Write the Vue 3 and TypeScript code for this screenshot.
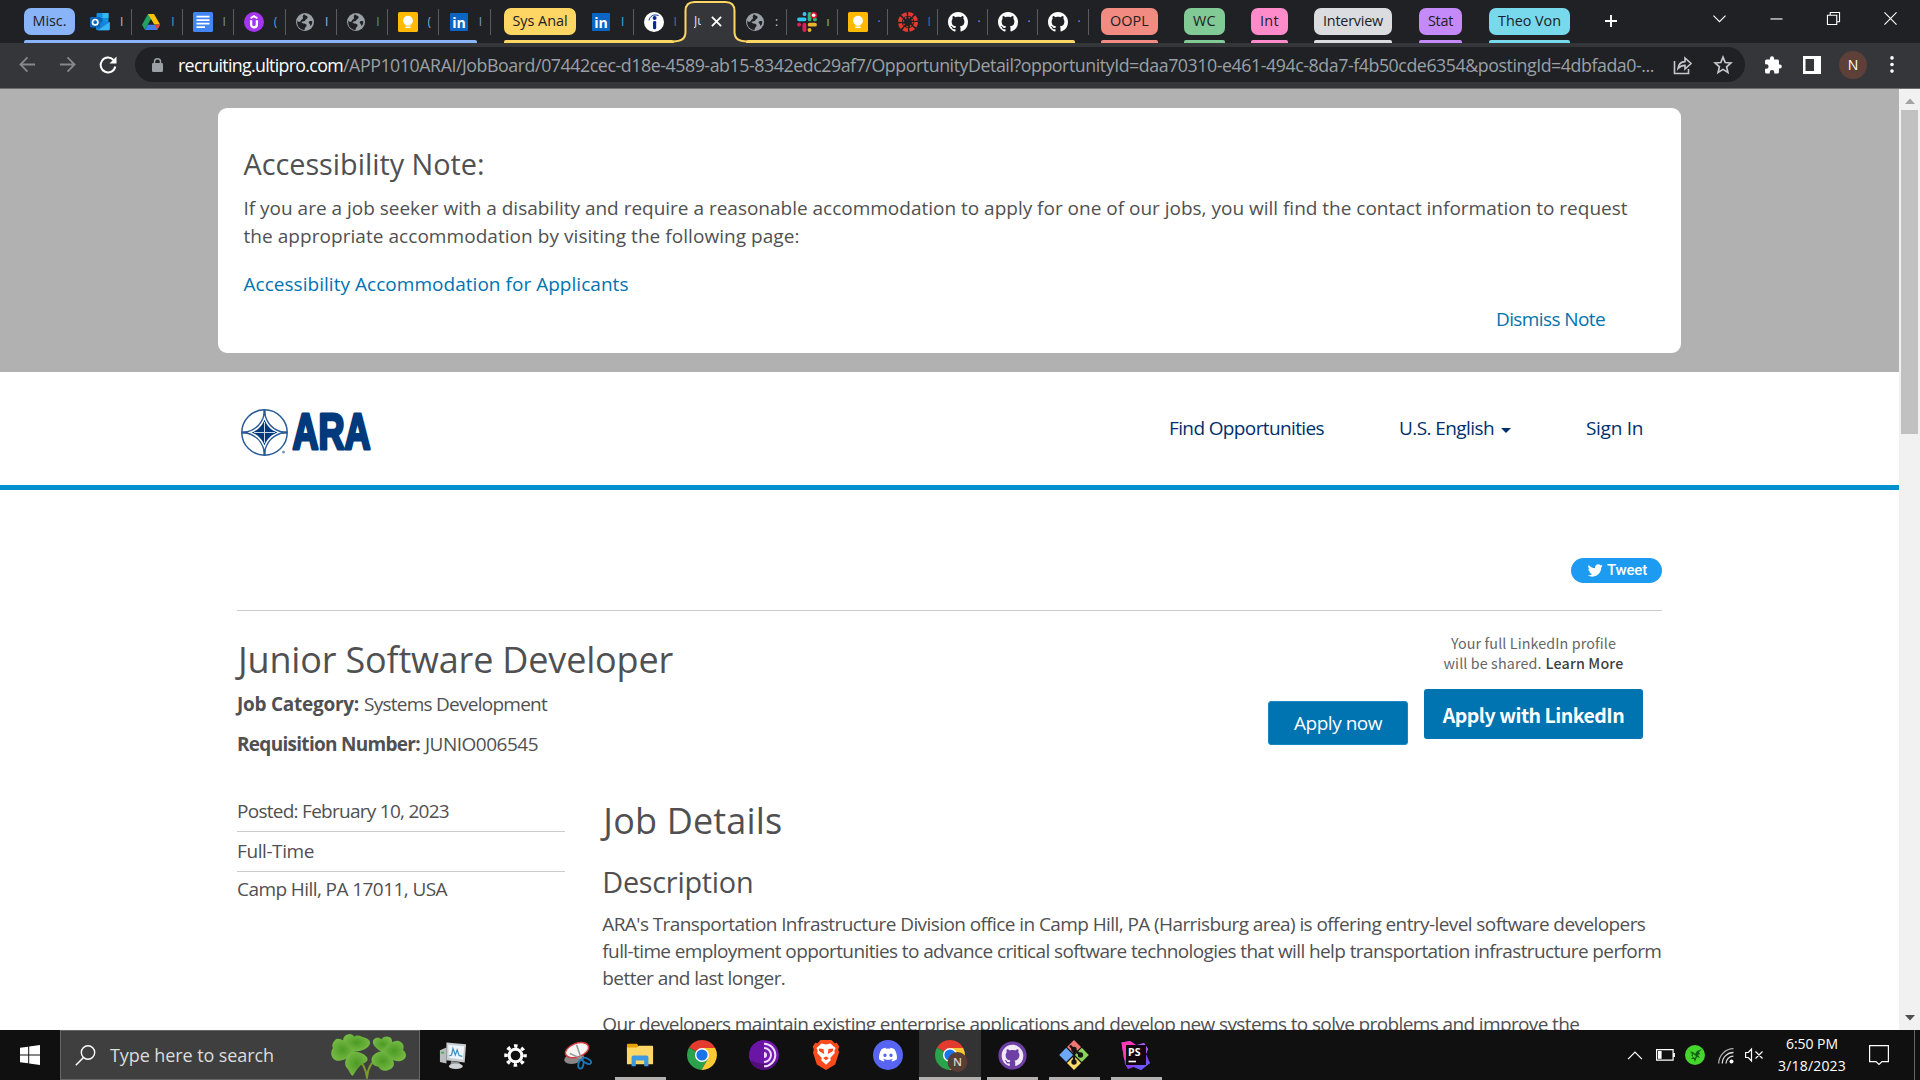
<script setup lang="ts">
import type { Directive } from 'vue'

interface Tab {
  icon: string
  letter: string
  color: string
  width: number
  divider: boolean
}
interface Group {
  label: string
  color: string
  width: number
  gap: number
}
interface TaskItem {
  icon: string
  width: number
  size: number
  running?: boolean
  active?: boolean
}

// Tracks a line of text so that it fills the given width.
const vFit: Directive<HTMLElement, number> = {
  mounted(el, binding) {
    const count = (el.textContent ?? '').trim().length
    const natural = el.getBoundingClientRect().width
    if (count > 0) el.style.letterSpacing = `${(binding.value - natural) / count}px`
  },
}

const octocat =
  'M8 0C3.58 0 0 3.58 0 8c0 3.54 2.29 6.53 5.47 7.59.4.07.55-.17.55-.38 0-.19-.01-.82-.01-1.49-2.01.37-2.53-.49-2.69-.94-.09-.23-.48-.94-.82-1.13-.28-.15-.68-.52-.01-.53.63-.01 1.08.58 1.23.82.72 1.21 1.87.87 2.33.66.07-.52.28-.87.51-1.07-1.78-.2-3.64-.89-3.64-3.95 0-.87.31-1.59.82-2.15-.08-.2-.36-1.02.08-2.12 0 0 .67-.21 2.2.82.64-.18 1.32-.27 2-.27s1.36.09 2 .27c1.53-1.04 2.2-.82 2.2-.82.44 1.1.16 1.92.08 2.12.51.56.82 1.27.82 2.15 0 3.07-1.87 3.75-3.65 3.95.29.25.54.73.54 1.48 0 1.07-.01 1.93-.01 2.2 0 .21.15.46.55.38A8.01 8.01 0 0 0 16 8c0-4.42-3.58-8-8-8z'
const discord =
  'M20.317 4.37a19.79 19.79 0 0 0-4.885-1.515.074.074 0 0 0-.079.037c-.21.375-.444.865-.608 1.25a18.3 18.3 0 0 0-5.487 0 12.6 12.6 0 0 0-.617-1.25.077.077 0 0 0-.079-.037A19.74 19.74 0 0 0 3.677 4.37a.07.07 0 0 0-.032.027C.533 9.046-.319 13.58.099 18.058a.082.082 0 0 0 .031.056 19.9 19.9 0 0 0 5.993 3.03.078.078 0 0 0 .084-.028c.462-.63.873-1.295 1.226-1.994a.076.076 0 0 0-.041-.106 13.1 13.1 0 0 1-1.872-.892.077.077 0 0 1-.008-.128c.126-.094.252-.192.372-.291a.074.074 0 0 1 .078-.01c3.928 1.793 8.18 1.793 12.061 0a.074.074 0 0 1 .079.009c.12.099.246.198.373.292a.077.077 0 0 1-.007.128 12.3 12.3 0 0 1-1.873.891.077.077 0 0 0-.041.107c.36.698.772 1.363 1.225 1.993a.076.076 0 0 0 .084.029 19.84 19.84 0 0 0 6.002-3.03.077.077 0 0 0 .031-.055c.5-5.177-.838-9.674-3.548-13.66a.061.061 0 0 0-.031-.029zM8.02 15.331c-1.183 0-2.157-1.086-2.157-2.419s.956-2.419 2.157-2.419c1.21 0 2.176 1.095 2.157 2.419 0 1.333-.956 2.419-2.157 2.419zm7.975 0c-1.183 0-2.157-1.086-2.157-2.419s.955-2.419 2.157-2.419c1.21 0 2.176 1.095 2.157 2.419 0 1.333-.946 2.419-2.157 2.419z'

const chromeMark = `
  <path d="M15 15 2.01 7.5A15 15 0 0 1 28 7.5z" fill="#e33b2e"/>
  <path d="M15 15 2.01 7.5A15 15 0 0 0 14.5 30L21 18.5z" fill="#2ba24c"/>
  <path d="M15 8H28.2A15 15 0 0 1 14.5 30L21 18.5z" fill="#fcc934"/>
  <path d="M15 8H28.2L27.9 7.4 15 6z" fill="#e33b2e"/>
  <circle cx="15" cy="15" r="7" fill="#fff"/><circle cx="15" cy="15" r="5.6" fill="#1a73e8"/>`

// Twenty-unit marks for the tabs.
const tabIcons: Record<string, string> = {
  outlook: `
    <rect x="6.5" y="1" width="12" height="10" rx="1" fill="#1490df"/>
    <rect x="12.5" y="1" width="6" height="5" fill="#35b8f1"/><rect x="6.5" y="6" width="6" height="5" fill="#0f5fae"/>
    <path d="M6 10.5 19.7 10v7a1.3 1.3 0 0 1-1.3 1.3H7.3A1.3 1.3 0 0 1 6 17z" fill="#1784d9"/>
    <path d="M19.7 10 8 18.2h10.4a1.3 1.3 0 0 0 1.3-1.3z" fill="#35b8f1"/>
    <rect x="0" y="5" width="10.4" height="10.4" rx="1" fill="#0a66bc"/>
    <circle cx="5.2" cy="10.2" r="2.7" fill="none" stroke="#fff" stroke-width="1.7"/>`,
  drive: `
    <path d="M7 2h6l-6.5 11L3.7 17.6 1 12.8z" fill="#1ea362"/>
    <path d="M7 2h6l6.1 10.6h-5.8z" fill="#ffc107"/>
    <path d="M6.6 12.8h12.5l-3 5.2H3.7z" fill="#3f7de8"/>
    <path d="M13.5 12.8h5.6l-2.9 5z" fill="#ea4335"/>`,
  docs: `
    <rect width="20" height="20" rx="1.6" fill="#4285f4"/>
    <path d="M3.5 4.7h13M3.5 8.2h13M3.5 11.7h13M3.5 15.2h8.5" stroke="#fff" stroke-width="1.7"/>`,
  udemy: `
    <circle cx="10" cy="10" r="10" fill="#a435f0"/>
    <path d="M6.6 6.2 10 4.2l3.4 2" fill="none" stroke="#fff" stroke-width="1.9"/>
    <path d="M7.1 8.3v4.2a2.9 2.9 0 0 0 5.8 0V8.3" fill="none" stroke="#fff" stroke-width="2.3"/>`,
  globe: `
    <circle cx="10" cy="10" r="9" fill="#9aa0a6"/>
    <path d="M9.2 2.3c1 1.9 3.6 1.2 3.4 3.1-.1 1.7-2.1 1.4-2.3 2.9-.2 1.3-2.4 1-3.3 1.5-1.3.6.5 1.7 1.9 1.7 1.6 0 3.2 1 2.6 2.5-.5 1.2-2 1.5-1.9 3.9-5.5-.2-8.4-5.3-7.1-9.5.6 1 1.3 1.5 2.1 1.5 1.3 0 1.1-1.9 2.3-2.4 1.1-.4 1.4-1.1.9-2.2-.3-.9.3-2 1.4-3z" fill="#202124"/>
    <path d="M17.3 9.4c-1.7-.7-3.4-.2-3.6 1.1-.1 1.1 1.4.9 1.3 2.2 0 .7.5 1 .9 1 1-1.3 1.5-2.8 1.4-4.3z" fill="#202124"/>`,
  keep: `
    <rect width="20" height="20" rx="1.6" fill="#ffba00"/>
    <circle cx="10" cy="8.6" r="4.9" fill="#fff"/><path d="M7.4 11h5.2v2.5H7.4zM7.4 14.4h5.2v1.7H7.4z" fill="#fff"/>`,
  linkedin: `
    <rect x="1" y="1" width="18" height="18" rx="1" fill="#0a66c2"/>
    <text x="3.2" y="16" font-size="15" font-weight="700" font-family="Open Sans, sans-serif" fill="#fff" textLength="13.6" lengthAdjust="spacingAndGlyphs">in</text>`,
  indeed: `
    <circle cx="10" cy="10" r="10" fill="#fff"/>
    <circle cx="10.6" cy="6" r="2" fill="#08299b"/><rect x="9" y="8.9" width="3.2" height="8.4" rx="1.4" fill="#08299b"/>
    <path d="M5 8.4C6 4 9.5 1.8 14.6 3.6" fill="none" stroke="#08299b" stroke-width="1"/>`,
  slack: `
    <g stroke-width="3.8" stroke-linecap="round">
    <path d="M2 7.3h5.6M7.5 2v.2" stroke="#36c5f0"/><path d="M12.6 2v5.4M18 7.4h-.2" stroke="#2eb67d"/>
    <path d="M12.6 12.7H18M12.5 18v-.2" stroke="#ecb22e"/><path d="M7.4 12.6V18M2 12.6h.2" stroke="#e01e5a"/></g>
    <circle cx="16.7" cy="3.3" r="3.3" fill="#e8102a"/><circle cx="16.7" cy="3.3" r="1.8" fill="#fff"/>`,
  canvas: `
    <circle cx="10" cy="10" r="8.1" fill="none" stroke="#e63a2c" stroke-width="3.8" stroke-dasharray="4.8 1.56"/>
    <circle cx="10" cy="10" r="4.7" fill="none" stroke="#e63a2c" stroke-width="1.5" stroke-dasharray="1.5 2.19"/>`,
  github: `<path d="${octocat}" transform="scale(1.25)" fill="#fff"/>`,
}

// Thirty-unit marks for the task bar.
const taskIcons: Record<string, string> = {
  monitor: `
    <path d="M1 10 8 7v17l-7-1.500z" fill="#b9bdc0"/><path d="M2 12.500h3.500" stroke="#4caf50" stroke-width="2"/>
    <path d="M8 1.500 29 3.500 27.500 23 8 20.500z" fill="#c9cccf"/><path d="M10 4 27 5.500 25.500 20 10.500 18z" fill="#eef6fb"/>
    <path d="m11 16 2.500-1 1.500-7 2.500 7 2-5.500 2 6 3.500 1" fill="none" stroke="#3c8fc6" stroke-width="1.300"/>
    <path d="M13 21.500 22 23l1.500 4H12z" fill="#8f9498"/><ellipse cx="18" cy="27" rx="7.500" ry="3" fill="#cfd2d4"/>`,
  gear: `
    <circle cx="15" cy="15" r="7.6" fill="none" stroke="#fff" stroke-width="3.6"/>
    <circle cx="15" cy="15" r="11.4" fill="none" stroke="#fff" stroke-width="4.2" stroke-dasharray="4.2 4.754" stroke-dashoffset="2.1"/>`,
  snip: `
    <ellipse cx="11.5" cy="18" rx="10.5" ry="5.5" fill="#8c8686" transform="rotate(-12 11.5 18)"/>
    <ellipse cx="14.5" cy="9.5" rx="12.5" ry="7" fill="#f7f4f4" stroke="#d63b3f" stroke-width="1.5" transform="rotate(-20 14.5 9.5)"/>
    <path d="m14 4 5.5 16M7 13l14 6" stroke="#9a9a9a" stroke-width="1.6"/>
    <ellipse cx="18.5" cy="24" rx="2.6" ry="4.6" fill="none" stroke="#1976b8" stroke-width="1.9" transform="rotate(12 18.5 24)"/>
    <ellipse cx="24.5" cy="20.5" rx="5" ry="2.4" fill="none" stroke="#1976b8" stroke-width="1.9" transform="rotate(28 24.5 20.5)"/>`,
  folder: `
    <path d="M1 4.2A1.2 1.2 0 0 1 2.2 3h9.5l2 3H28a1 1 0 0 1 1 1v4H1z" fill="#e9a100"/>
    <path d="M1 7h10.5L14 5h14a1 1 0 0 1 1 1v18a1 1 0 0 1-1 1H2a1 1 0 0 1-1-1z" fill="#ffd766"/>
    <path d="M6 27V17.500a2 2 0 0 1 2-2h14a2 2 0 0 1 2 2V27h-4.500v-6h-9v6z" fill="#3c9ae0"/>`,
  chrome: chromeMark,
  tor: `
    <circle cx="15" cy="15" r="14.8" fill="#7318b5"/><path d="M15 .2a14.8 14.8 0 0 0 0 29.6z" fill="#6a15a5"/>
    <path d="M1 20a14.8 14.8 0 0 0 28 0 30 30 0 0 1-28 0z" fill="#420c5d" opacity=".6"/>
    <path d="M15 3.7a11.3 11.3 0 0 1 0 22.6M15 8a7 7 0 0 1 0 14" fill="none" stroke="#f0ddfa" stroke-width="2"/>
    <path d="M15 12a3 3 0 0 1 0 6z" fill="#f0ddfa"/>`,
  brave: `
    <path d="M9.5 0h11l3 3.2 2.2-.4 2.5 3.6-1 3.2.8 3-3.8 12L15 30l-9.2-5.4L2 12.6l.8-3-1-3.2 2.5-3.6 2.2.4z" fill="#fb4a1c"/>
    <path d="m15 4.5 4.5-1L24.5 8l-1.2 3 .5 2-4.6 5 .6 2.3L15 24.8l-4.8-4.5.6-2.3-4.6-5 .5-2-1.2-3 5-4.5z" fill="#fff"/>
    <path d="m8 8.5 4.5.4.7 5-1.8-1L8 11zM22 8.5l-4.5.4-.7 5 1.8-1L22 11zM15 10.5v6l3 1.6-3 2.2-3-2.2 3-1.6" fill="#fb4a1c"/>`,
  discord: `<circle cx="15" cy="15" r="15" fill="#5865f2"/><path d="${discord}" transform="translate(6 5.6) scale(.75)" fill="#fff"/>`,
  profile: `${chromeMark}
    <circle cx="22.5" cy="22" r="10" fill="#5a3d34"/>
    <text x="22.5" y="26.2" text-anchor="middle" font-size="11.5" font-weight="600" font-family="Open Sans, sans-serif" fill="#d9d2cf">N</text>`,
  octo: `<circle cx="15" cy="15" r="14.6" fill="#6e40a5"/><path d="${octocat}" transform="translate(3.8 4) scale(1.4)" fill="#f1eaf6"/>`,
  git: `
    <path d="m15 0 7 7-7 7-7-7z" fill="#f07575"/><path d="m7.2 7.8 7 7.2-7 7-7-7z" fill="#6ca8f7"/>
    <path d="m22.8 7.8 7 7.2-7 7-7-7z" fill="#8bd35b"/><path d="m15 16 7 7-7 7-7-7z" fill="#fbdc6a"/>
    <path d="M11 5.5 15 10v12M15 10l7 5" fill="none" stroke="#151515" stroke-width="2.3"/>
    <circle cx="15" cy="9.5" r="2.7" fill="#151515"/><circle cx="15" cy="22" r="2.7" fill="#151515"/><circle cx="21.5" cy="15" r="2.7" fill="#151515"/>`,
  storm: `
    <path d="M.5 2.5 9 1l6 4 8-2 4 6-2 5 4 9-9 7-7-3-6 2-3-5z" fill="#8a3df5"/>
    <path d="M.5 2.5 9 1l6 4-9 17-3-3z" fill="#ff39b4"/><path d="m17 5 6-2 4 6-2 5-6-1z" fill="#b45cf0"/>
    <path d="m23 18 6 5-9 7-7-3z" fill="#6b57ff"/>
    <rect x="5" y="5" width="20" height="20" fill="#12060f"/><rect x="7.5" y="20.7" width="7.5" height="1.6" fill="#fff"/>
    <text x="7" y="15.5" font-size="10.5" font-weight="700" font-family="Open Sans, sans-serif" fill="#fff" textLength="12.5">PS</text>`,
}

const miscTabs: Tab[] = ['outlook', 'drive', 'docs', 'udemy', 'globe', 'globe', 'keep', 'linkedin'].map((icon, i) => ({
  icon,
  letter: ['I', 'I', 'I', '(', 'I', 'I', '(', 'I'][i],
  color: ['#b7bfc4', '#39a4c9', '#6f9aa3', '#4aa9dc', '#9ab8e6', '#4f9c97', '#7fb3d6', '#8098c8'][i],
  width: 51.25,
  divider: true,
}))
const beforeActive: Tab[] = [
  { icon: 'linkedin', letter: 'I', color: '#33b1e0', width: 52.5, divider: true },
  { icon: 'indeed', letter: 'I', color: '#5c6f84', width: 50, divider: false },
]
const afterActive: Tab[] = [
  { icon: 'globe', letter: ':', color: '#c3cad0', width: 51.5, divider: true },
  { icon: 'slack', letter: 'ı', color: '#7fc1d8', width: 51, divider: true },
  { icon: 'keep', letter: '·', color: '#3e9ce6', width: 50, divider: true },
  { icon: 'canvas', letter: 'I', color: '#2e79c0', width: 50, divider: true },
  { icon: 'github', letter: '·', color: '#65a9ee', width: 50, divider: true },
  { icon: 'github', letter: '·', color: '#65a9ee', width: 50, divider: true },
  { icon: 'github', letter: '·', color: '#65a9ee', width: 50.5, divider: true },
]
const groups: Group[] = [
  { label: 'OOPL', color: '#f28b82', width: 57, gap: 12 },
  { label: 'WC', color: '#81c995', width: 41, gap: 26 },
  { label: 'Int', color: '#ff8bcb', width: 37, gap: 26 },
  { label: 'Interview', color: '#dadce0', width: 78, gap: 26 },
  { label: 'Stat', color: '#c58af9', width: 43, gap: 27 },
  { label: 'Theo Von', color: '#78d9ec', width: 81, gap: 27 },
]
const tasks: TaskItem[] = [
  { icon: 'monitor', width: 64, size: 28 },
  { icon: 'gear', width: 60, size: 25 },
  { icon: 'snip', width: 64, size: 29 },
  { icon: 'folder', width: 62, size: 28, running: true },
  { icon: 'chrome', width: 62, size: 30 },
  { icon: 'tor', width: 62, size: 30 },
  { icon: 'brave', width: 62, size: 30 },
  { icon: 'discord', width: 62, size: 30 },
  { icon: 'profile', width: 62, size: 30, running: true, active: true },
  { icon: 'octo', width: 62, size: 29, running: true },
  { icon: 'git', width: 62, size: 30, running: true },
  { icon: 'storm', width: 62, size: 30, running: true },
]
</script>

<template>
  <div class="screen">
    <header class="strip">
      <div class="cluster misc">
        <div class="cell-row">
          <span class="pill" style="--tint: #8ab4f8; width: 51px"><b v-fit="34">Misc.</b></span>
          <div v-for="(t, i) in miscTabs" :key="i" class="tab" :class="{ divided: t.divider, first: i === 0 }" :style="{ width: t.width + 'px' }">
            <svg viewBox="0 0 20 20" v-html="tabIcons[t.icon]"></svg>
            <i :style="{ color: t.color }">{{ t.letter }}</i>
          </div>
        </div>
        <div class="line blue"></div>
      </div>
      <div class="cluster sys">
        <div class="cell-row">
          <span class="pill" style="--tint: #fdd663; width: 72px"><b v-fit="55">Sys Anal</b></span>
          <div v-for="(t, i) in beforeActive" :key="i" class="tab" :class="{ divided: t.divider, first: i === 0 }" :style="{ width: t.width + 'px' }">
            <svg viewBox="0 0 20 20" v-html="tabIcons[t.icon]"></svg>
            <i :style="{ color: t.color }">{{ t.letter }}</i>
          </div>
          <div class="active-tab">
            <svg class="outline" viewBox="0 0 74 43">
              <path d="M0 43C7 42 12.500 39 12.500 32V11c0-6 3-9 9-9h31c6 0 9 3 9 9v21c0 7 5 10 12.500 11z" fill="#35363a" />
              <path d="M0 41.500c8 0 12.500-3 12.500-9.500V11c0-6 3-9 9-9h31c6 0 9 3 9 9v21c0 6.500 4.500 9.500 12.500 9.500" fill="none" stroke="#fdd663" stroke-width="2" />
            </svg>
            <i class="title">Ju</i>
            <svg class="close" viewBox="0 0 12 12"><path d="m1 1 10 10M11 1 1 11" stroke="#fff" stroke-width="2" /></svg>
          </div>
          <div v-for="(t, i) in afterActive" :key="i" class="tab" :class="{ divided: t.divider }" :style="{ width: t.width + 'px' }">
            <svg viewBox="0 0 20 20" v-html="tabIcons[t.icon]"></svg>
            <i :style="{ color: t.color }">{{ t.letter }}</i>
          </div>
        </div>
        <div class="line-split"><div class="line left"></div><div class="line right"></div></div>
      </div>
      <div v-for="g in groups" :key="g.label" class="cluster" :style="{ marginLeft: g.gap + 'px', width: g.width + 'px', '--tint': g.color }">
        <div class="cell-row"><span class="pill wide"><b v-fit="g.width - 18">{{ g.label }}</b></span></div>
        <div class="line tint"></div>
      </div>
      <svg class="plus" viewBox="0 0 14 14"><path d="M7 0v14M0 7h14" stroke="#fff" stroke-width="2.200" /></svg>
      <div class="window-keys">
        <svg viewBox="0 0 14 14"><path d="m.5 4 6.500 6.500L13.500 4" /></svg>
        <svg viewBox="0 0 14 14"><path d="M.5 7.500h13" /></svg>
        <svg viewBox="0 0 14 14"><path d="M.5 3.500h10v10H.5zM3.500 3.500v-3h10v10h-3" /></svg>
        <svg viewBox="0 0 14 14"><path d="m.5.500 13 13M13.500.500l-13 13" /></svg>
      </div>
    </header>

    <div class="toolbar">
      <svg class="back" viewBox="0 0 18 18"><path d="M17 9H2M9 1.500 1.500 9 9 16.500" /></svg>
      <svg class="forward" viewBox="0 0 18 18"><path d="M1 9h15M9 1.500 16.500 9 9 16.500" /></svg>
      <svg class="reload" viewBox="0 0 18 18"><path d="M16.300 10.500A7.400 7.400 0 1 1 14.500 4" fill="none" stroke="#fff" stroke-width="2" /><path d="M17.500.500v7h-7z" fill="#fff" /></svg>
      <div class="omnibox">
        <svg class="lock" viewBox="0 0 11 14"><rect y="5" width="11" height="9" rx="1.200" fill="#9aa0a6" /><path d="M2.500 6V3.700a3 3 0 0 1 6 0V6" fill="none" stroke="#9aa0a6" stroke-width="1.500" /></svg>
        <span v-fit="165" class="host">recruiting.ultipro.com</span>
        <span v-fit="1311" class="path">/APP1010ARAI/JobBoard/07442cec-d18e-4589-ab15-8342edc29af7/OpportunityDetail?opportunityId=daa70310-e461-494c-8da7-f4b50cde6354&amp;postingId=4dbfada0-...</span>
        <svg class="share" viewBox="0 0 20 20"><path d="M1.500 6v12.500h14V14M5 13.500C5.500 9 8 6.800 12 6.600V3l6 5.500-6 5.500v-3.600c-3 0-5 .8-7 3.100z" /></svg>
        <svg class="star" viewBox="0 0 20 20"><path d="m10 2.200 2.200 5.300 5.700.500-4.300 3.800 1.300 5.600L10 14.400l-4.900 3 1.300-5.600L2.100 8l5.700-.500z" /></svg>
      </div>
      <svg class="puzzle" viewBox="0 0 20 20"><path d="M18 9.500h-1.400V5.800A1.700 1.700 0 0 0 14.900 4h-3.700V2.600a2.300 2.300 0 0 0-4.600 0V4H3A1.700 1.700 0 0 0 1.200 5.700v3.500h1.400a2.500 2.500 0 0 1 0 5H1.200v3.500A1.700 1.700 0 0 0 3 19.400h3.400V18a2.500 2.500 0 0 1 5 0v1.400h3.500a1.700 1.700 0 0 0 1.700-1.700V14H18a2.300 2.300 0 0 0 0-4.500z" fill="#fff" /></svg>
      <svg class="panel" viewBox="0 0 18 18"><path d="M0 0h18v18H0zM2.500 3v12h8.500V3z" fill="#fff" fill-rule="evenodd" /></svg>
      <span class="avatar">N</span>
      <svg class="dots" viewBox="0 0 4 18"><circle cx="2" cy="2" r="1.900" /><circle cx="2" cy="9" r="1.900" /><circle cx="2" cy="16" r="1.900" /></svg>
    </div>

    <div class="viewport">
      <div class="page">
        <section class="note-area">
          <div class="note">
            <h2><span v-fit="241">Accessibility Note:</span></h2>
            <p>
              <span v-fit="1384">If you are a job seeker with a disability and require a reasonable accommodation to apply for one of our jobs, you will find the contact information to request</span><br />
              <span v-fit="556">the appropriate accommodation by visiting the following page:</span>
            </p>
            <a class="apply-link"><span v-fit="385">Accessibility Accommodation for Applicants</span></a>
            <a class="dismiss"><span v-fit="109">Dismiss Note</span></a>
          </div>
        </section>

        <nav class="site-nav">
          <svg class="logo" viewBox="0 0 132 48">
            <g fill="none" stroke="#2c5c96">
              <circle cx="23.500" cy="23.500" r="22.700" stroke-width="1.500" />
              <path d="M23.500.800v45.400M.800 23.500h45.400" stroke-width="2.400" />
              <path d="M23.500 4c2.200 10.500 9 17.300 19.500 19.500C32.500 25.700 25.700 32.500 23.500 43 21.300 32.500 14.500 25.700 4 23.500 14.500 21.300 21.300 14.500 23.500 4z" fill="#fff" stroke-width="1.300" />
            </g>
            <path d="M23.500 10.500c2 6.200 6.800 11 13 13-6.200 2-11 6.800-13 13-2-6.200-6.800-11-13-13 6.200-2 11-6.800 13-13z" fill="#003a7c" />
            <path d="M23.500 13v21M13 23.500h21" stroke="#c9d6e6" stroke-width="1" />
            <circle cx="42.500" cy="43" r="1.500" fill="#7f9cc0" />
            <text x="51.500" y="40" font-family="Liberation Sans, sans-serif" font-weight="700" font-size="50" fill="#003a7c" stroke="#003a7c" stroke-width="3.200" stroke-linejoin="round" textLength="78" lengthAdjust="spacingAndGlyphs">ARA</text>
          </svg>
          <a class="find"><span v-fit="155">Find Opportunities</span></a>
          <a class="lang"><span v-fit="95">U.S. English</span><em></em></a>
          <a class="sign"><span v-fit="57">Sign In</span></a>
        </nav>

        <main>
          <div class="social">
            <a class="tweet">
              <svg viewBox="0 0 24 24"><path d="M23.643 4.937c-.835.37-1.732.62-2.675.733.962-.576 1.700-1.490 2.048-2.578-.9.534-1.897.922-2.958 1.130-.85-.904-2.060-1.470-3.400-1.470-2.572 0-4.658 2.086-4.658 4.660 0 .364.042.718.120 1.060-3.873-.195-7.304-2.050-9.602-4.868-.4.690-.63 1.490-.63 2.342 0 1.616.823 3.043 2.072 3.878-.764-.025-1.482-.234-2.110-.583v.060c0 2.257 1.605 4.140 3.737 4.568-.392.106-.803.162-1.227.162-.3 0-.593-.028-.877-.082.593 1.850 2.313 3.198 4.352 3.234-1.595 1.250-3.604 1.995-5.786 1.995-.376 0-.747-.022-1.112-.065 2.062 1.323 4.510 2.093 7.140 2.093 8.570 0 13.255-7.098 13.255-13.254 0-.2-.005-.402-.014-.602.910-.658 1.700-1.477 2.323-2.410z" fill="#fff" /></svg>
              <span v-fit="40">Tweet</span>
            </a>
          </div>
          <div class="headline">
            <div class="job">
              <h1><span v-fit="435">Junior Software Developer</span></h1>
              <p><strong v-fit="122">Job Category:</strong><span v-fit="183">Systems Development</span></p>
              <p><strong v-fit="183">Requisition Number:</strong><span v-fit="113">JUNIO006545</span></p>
            </div>
            <button class="apply-now"><span v-fit="88">Apply now</span></button>
            <div class="linkedin">
              <div class="consent"><span v-fit="165">Your full LinkedIn profile</span></div>
              <div class="consent"><span v-fit="98">will be shared.</span><b v-fit="78">Learn More</b></div>
              <button><span v-fit="181.5">Apply with LinkedIn</span></button>
            </div>
          </div>
          <div class="details">
            <aside>
              <div class="fact posted"><span v-fit="212">Posted: February 10, 2023</span></div>
              <div class="fact type"><span v-fit="77">Full-Time</span></div>
              <div class="fact place"><span v-fit="210">Camp Hill, PA 17011, USA</span></div>
            </aside>
            <article>
              <h1><span v-fit="179">Job Details</span></h1>
              <h2><span v-fit="151">Description</span></h2>
              <p>
                <span v-fit="1043">ARA's Transportation Infrastructure Division office in Camp Hill, PA (Harrisburg area) is offering entry-level software developers</span><br />
                <span v-fit="1059">full-time employment opportunities to advance critical software technologies that will help transportation infrastructure perform</span><br />
                <span v-fit="183">better and last longer.</span>
              </p>
              <p><span v-fit="977">Our developers maintain existing enterprise applications and develop new systems to solve problems and improve the</span></p>
            </article>
          </div>
        </main>
      </div>
      <div class="scrollbar">
        <svg viewBox="0 0 10 6"><path d="m0 6 5-5.500L10 6z" fill="#a3a3a3" /></svg>
        <div class="thumb"></div>
        <svg class="down" viewBox="0 0 10 6"><path d="m0 0 5 5.500L10 0z" fill="#505050" /></svg>
      </div>
    </div>

    <footer class="taskbar">
      <svg class="start" viewBox="0 0 20 20"><path d="M0 2.800 8.200 1.700v7.800H0zM9.200 1.500 20 0v9.500H9.200zM0 10.500h8.200v7.800L0 17.200zM9.200 10.500H20V20L9.200 18.500z" fill="#fff" /></svg>
      <div class="search">
        <svg class="glass" viewBox="0 0 21 21"><circle cx="13" cy="7.500" r="6.700" fill="none" stroke="#fff" stroke-width="1.400" /><path d="M8.500 12.500.800 20.200" stroke="#fff" stroke-width="1.500" /></svg>
        <span v-fit="164">Type here to search</span>
        <svg class="clover" viewBox="0 0 76 46">
          <defs>
            <radialGradient id="leaf"><stop offset="0" stop-color="#4b9a24" /><stop offset="1" stop-color="#74b843" /></radialGradient>
          </defs>
          <path d="M27 25c7 7 9 14 9.500 21M50 23c-9 5-13 12-13.500 22" fill="none" stroke="#7d9a2c" stroke-width="2" />
          <g fill="url(#leaf)">
            <path d="M22 18C11 13 10 4 16 1.500c3-1.500 6-.5 7.500 2 3-3 8 0 11 1 6 2 6 6 4 8-3 4-9 6-16 5.500z" />
            <path d="M23 19C17 8 8 3 4 7c-3 3-3 6-2 8-3 4-2 10 2 12 6 3 15-2 19-8z" />
            <path d="M22.500 18c-9 5-9.500 14-6.500 17 2 2 4 8 6 8 3-4 6-11 12-13 7-3 2-10-11.500-12z" />
            <path d="M52 19C42 14 40 7 45 5c3-1 5 0 6 1 3-4 8-3 10-1 3 5-2 11-9 14z" />
            <path d="M52 18.500c6-9.500 15-13.500 19-9.500 3 2 3 5 2 8 4 3 4 8 0 10-6 4-15-1-21-8.500z" />
            <path d="M52 18c-9 1-13 8-10 12 1 3 4 3 6 4 3 5 8 5 13 2 7-5 0-14-9-18z" />
          </g>
        </svg>
      </div>
      <div class="tasks">
        <div v-for="t in tasks" :key="t.icon" class="task" :class="{ running: t.running, active: t.active }" :style="{ width: t.width + 'px' }">
          <svg viewBox="0 0 30 30" :style="{ width: t.size + 'px', height: t.size + 'px' }" v-html="taskIcons[t.icon]"></svg>
        </div>
      </div>
      <div class="tray">
        <svg class="up" viewBox="0 0 17 10"><path d="m.8 9 7.700-7.700L16.200 9" fill="none" stroke="#fff" stroke-width="1.400" /></svg>
        <svg class="battery" viewBox="0 0 19 12"><path d="M.6.600h16.500v10.600H.6zM18.300 4v4" fill="none" stroke="#fff" stroke-width="1.200" /><path d="M2 2h3.600v7.800H2z" fill="#fff" /></svg>
        <svg class="razer" viewBox="0 0 20 20">
          <circle cx="10" cy="10" r="10" fill="#44d62c" />
          <path d="m3 5 5 2 2 2 2-3 5-2-3 3 1 2-2 1 2 3-3-1-1 2-1 3-1-3-3 0 2-2-2-2 2-1-3-1 2-1z" fill="#145f17" /><path d="m8 9 3 2-1 2-2-1z" fill="#44d62c" />
        </svg>
        <svg class="wifi" viewBox="0 0 16 16"><g fill="none" stroke="#d8d8d8" stroke-width="1.300"><path d="M.700 15.500A15 15 0 0 1 15.500.700" opacity=".8" /><path d="M4.300 15.500A11 11 0 0 1 15.500 4.500" /><path d="M8 15.500a7.500 7.500 0 0 1 7.500-7.300" /></g><circle cx="13.500" cy="13.500" r="2" fill="#fff" /></svg>
        <svg class="speaker" viewBox="0 0 19 14"><path d="M.600 4.500h2.700L6.500 1v12L3.300 9.500H.6zM10.500 3.500l7 7M17.500 3.500l-7 7" fill="none" stroke="#fff" stroke-width="1.200" /></svg>
        <div class="clock"><span v-fit="52">6:50 PM</span><span v-fit="68">3/18/2023</span></div>
        <svg class="notice" viewBox="0 0 20 20"><path d="M.600.600h18.800v16H13L10 19.400l-3-2.800H.6z" fill="none" stroke="#fff" stroke-width="1.200" /></svg>
        <div class="peek"></div>
      </div>
    </footer>
  </div>
</template>

<style>
body { margin: 0; overflow: hidden; }
</style>

<style scoped>
.screen { width: 1920px; height: 1080px; display: flex; flex-direction: column; overflow: hidden; background: #fff; color: #505052; font: 19px "Open Sans", "Noto Sans", sans-serif; }
.screen * { box-sizing: border-box; }
svg { display: block; flex: none; overflow: visible; }
h1, h2, p { margin: 0; font-weight: 400; }
span, strong, b { display: inline-block; white-space: nowrap; }

.strip { height: 43px; display: flex; background: #202124; padding-left: 24px; flex: none; }
.cluster { display: flex; flex-direction: column; flex: none; }
.cell-row { display: flex; height: 40px; padding-top: 8px; }
.misc { width: 467px; }
.sys { width: 585px; margin-left: 13px; }
.pill { height: 27px; border-radius: 7px; background: var(--tint); color: #202124; display: flex; align-items: center; justify-content: center; flex: none; }
.pill.wide { width: 100%; }
.pill b { font-weight: 400; font-size: 14.400px; line-height: 20px; margin-top: -2px; }
.tab { display: flex; align-items: center; height: 26px; padding-left: 9.500px; margin-top: 1px; flex: none; overflow: hidden; }
.tab.first { margin-left: 5.500px; }
.tab.divided { border-right: 1px solid #5b5c60; }
.tab svg { width: 20px; height: 20px; margin-top: -1px; }
.tab i, .title { font-style: normal; font-size: 12px; line-height: 20px; width: 3px; height: 20px; overflow: hidden; margin-left: 10px; }
.line { height: 3px; border-radius: 2px 2px 0 0; }
.blue { background: #8ab4f8; width: 453px; }
.tint { background: var(--tint); }
.line-split { display: flex; }
.line-split .line { background: #fdd663; }
.left { width: 170px; }
.right { width: 329px; margin-left: 72px; }
.active-tab { width: 50.500px; display: flex; height: 26px; align-items: center; flex: none; position: relative; margin-left: 1px; }
.outline { position: absolute; left: -12.500px; top: -8px; width: 74px; height: 43px; }
.title { position: relative; width: 7px; margin-left: 9px; color: #dfe3f5; }
.close { position: relative; width: 11px; height: 11px; margin-left: 10px; }
.plus { width: 12px; height: 14px; margin: 14px 0 0 35px; }
.window-keys { display: flex; gap: 44px; margin-left: 95.500px; padding-top: 12px; }
.window-keys svg { width: 13px; height: 13px; fill: none; stroke: #fff; stroke-width: 1.200; }

.toolbar { height: 46px; flex: none; background: #35363a; border-bottom: 1px solid #6b6c6e; display: flex; align-items: center; padding: 0 26px 2px 19px; }
.back, .forward { width: 17px; height: 17px; fill: none; stroke: #85878b; stroke-width: 1.900; }
.forward { margin-left: 23px; }
.reload { width: 18px; height: 18px; margin-left: 23px; }
.omnibox { width: 1610px; height: 35px; border-radius: 18px; background: #202124; margin-left: 18px; display: flex; align-items: center; padding-left: 17px; flex: none; }
.lock { width: 11px; height: 14px; margin-right: 15px; }
.omnibox span { font-size: 17.800px; line-height: 26px; }
.host { color: #fff; }
.path { color: #9aa0a6; }
.share { width: 20px; height: 20px; margin-left: 19px; fill: none; stroke: #c4c7cb; stroke-width: 1.600; }
.star { width: 20px; height: 20px; margin-left: 19.500px; fill: none; stroke: #c4c7cb; stroke-width: 1.700; }
.puzzle { width: 18px; height: 18px; margin-left: 18.500px; }
.panel { width: 18px; height: 18px; margin-left: 21.500px; }
.avatar { width: 28px; height: 28px; border-radius: 50%; background: #5d4037; color: #fff; font-size: 14px; line-height: 27px; text-align: center; margin-left: 18px; }
.dots { width: 4px; height: 17px; margin-left: 23px; fill: #fff; }

.viewport { height: 941px; flex: none; display: flex; overflow: hidden; }
.page { width: 1899px; overflow: hidden; flex: none; }
.scrollbar { width: 21px; background: #f1f1f1; display: flex; flex-direction: column; align-items: center; padding: 9px 0; }
.scrollbar svg { width: 10px; height: 6px; }
.thumb { width: 17px; height: 324px; background: #c1c1c1; margin-top: 6px; }
.scrollbar .down { margin-top: auto; }

.note-area { height: 283px; background: #b1b1b1; padding: 19px 218px; }
.note { height: 245px; background: #fff; border-radius: 9px; padding: 36px 0 0 25.500px; display: flex; flex-direction: column; line-height: 28px; }
h2 { font-size: 28.800px; line-height: 40px; }
.note p { margin-top: 10px; height: 56px; }
.note a { color: #0073b1; height: 28px; }
.apply-link { margin-top: 20px; }
.dismiss { margin: 7px 0 0 1252.500px; }

.site-nav { height: 118px; border-bottom: 5px solid #0090cd; display: flex; padding-left: 241px; color: #002f6c; line-height: 28px; }
.logo { width: 132px; height: 48px; margin-top: 37px; }
.site-nav a { margin-top: 42px; height: 28px; display: flex; }
.find { margin-left: 796px; }
.lang { margin-left: 75px; }
.lang em { border: 5px solid transparent; border-top-color: #002f6c; border-bottom: 0; height: 5px; margin: 14px 0 0 7px; }
.sign { margin-left: 75px; }

main { width: 1425px; margin-left: 237px; padding-top: 68px; }
.social { height: 53px; border-bottom: 1px solid #ccc; display: flex; justify-content: flex-end; }
.tweet { width: 91px; height: 25px; border-radius: 13px; background: #1d9bf0; color: #fff; display: flex; align-items: center; padding: 0 0 1px 16px; font: 500 15px "Roboto", sans-serif; }
.tweet svg { width: 16px; height: 17px; margin: 1px 4px 0 0; }
.headline { display: flex; height: 186px; }
.job { width: 1031px; padding-top: 23px; }
h1 { font-size: 36px; line-height: 51px; height: 50px; }
h1 span { margin-left: 1px; }
.job p { display: flex; gap: 5px; line-height: 28px; margin-top: 6px; }
.job p + p { margin-top: 12px; }
button { border: 0; padding: 0; color: #fff; background: #0073b1; border-radius: 3px; flex: none; }
.apply-now { width: 140px; height: 44px; margin-top: 90px; border: 1px solid #1786c2; font: 19px/28px "Open Sans", sans-serif; }
.linkedin { width: 219px; margin-left: 16px; padding-top: 22px; font-family: "Noto Sans CJK SC", sans-serif; }
.consent { font-size: 14.300px; line-height: 20px; height: 20px; display: flex; justify-content: center; gap: 4px; color: #666; }
.consent b { font-weight: 500; color: #404040; }
.linkedin button { width: 219px; height: 50px; margin-top: 16px; font: 700 19.500px/28px "Noto Sans CJK SC", sans-serif; }
.linkedin button span { padding-top: 1px; }
.details { display: flex; gap: 37.500px; }
aside { width: 328.500px; line-height: 28px; }
.fact span { display: block; width: fit-content; }
.posted { height: 35px; border-bottom: 1px solid #ccc; }
.type { height: 40px; padding-top: 5px; border-bottom: 1px solid #ccc; }
.place { padding-top: 3px; }
article { margin-top: -2px; width: 1062px; white-space: nowrap; }
article h2 { margin-top: 17px; }
article p { margin-top: 9px; line-height: 27px; }
article p span { display: inline-block; vertical-align: top; }
article p + p { margin-top: 19px; }

.taskbar { height: 50px; flex: none; background: #101010; display: flex; color: #fff; }
.start { width: 20px; height: 20px; margin: 15px 20px 0; }
.search { width: 360px; height: 50px; background: #3f3f3f; border: 1px solid #666; display: flex; align-items: center; padding-left: 14px; flex: none; overflow: hidden; }
.glass { width: 21px; height: 21px; margin-right: 14px; }
.search span { color: #dcdcdc; font-size: 18px; line-height: 28px; }
.clover { width: 75px; height: 46px; margin: 2px 0 0 57px; }
.tasks { display: flex; margin-left: 1px; }
.task { display: flex; align-items: center; justify-content: center; position: relative; flex: none; }
.running::after { content: ""; position: absolute; left: 6px; right: 5px; bottom: 0; height: 3px; background: #b3b0b0; }
.task.active { background: #333; }
.active.running::after { left: 0; right: 0; }
.tray { display: flex; align-items: center; margin-left: auto; width: 293px; }
.up { width: 16px; height: 9px; }
.battery { width: 19px; height: 12px; margin-left: 13px; }
.razer { width: 20px; height: 20px; margin-left: 10px; }
.wifi { width: 16px; height: 16px; margin-left: 13px; margin-top: 2px; }
.speaker { width: 19px; height: 14px; margin-left: 11px; }
.clock { display: flex; flex-direction: column; align-items: center; width: 70px; margin-left: 13px; font-size: 14px; line-height: 22px; }
.notice { width: 20px; height: 20px; margin-left: 22px; }
.peek { width: 1px; height: 50px; background: #666; margin-left: 25px; }
</style>
